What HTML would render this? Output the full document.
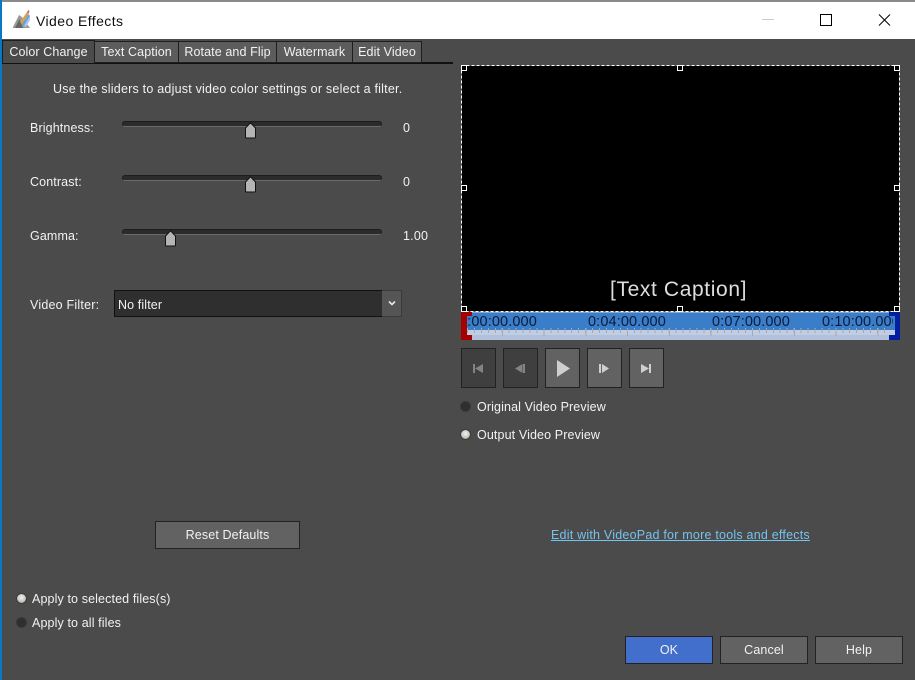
<!DOCTYPE html>
<html><head><meta charset="utf-8"><title>Video Effects</title>
<style>
html,body{margin:0;padding:0;background:#4b4b4b}
#w{position:relative;width:915px;height:680px;overflow:hidden;background:#4b4b4b;font-family:"Liberation Sans",sans-serif;font-size:12.5px;color:#f2f2f2}
#w div,#w span,#w svg{position:absolute;box-sizing:border-box}
.t{white-space:nowrap;line-height:14px;letter-spacing:.22px}
.s{letter-spacing:.12px}
.tab{top:41px;height:22px;background:#5c5c5c;border:1px solid #1e1e1e;text-align:center;line-height:21px;letter-spacing:.1px;white-space:nowrap}
.track{left:122px;width:260px;height:6px;background:#2b2b2b;border:1px solid #1d1d1d;border-bottom-color:#6a6a6a;border-radius:3px}
.btn{background:#626262;border:1px solid #222;text-align:center;line-height:27px;letter-spacing:.12px;white-space:nowrap}
.r{width:11px;height:11px;border-radius:50%;border:1px solid #3a3a3a}
.off{background:#2f2f2f}
.on{background:radial-gradient(circle at 50% 40%,#f2f2ee 0,#c8c8c2 55%,#8b8b86 100%)}
.pb{top:348px;width:35px;height:40px;border:1px solid #222}
.h{width:6px;height:6px;background:#000;border:1px solid #fff}
.tl{top:314px;font-size:14.5px;line-height:16px;color:#0c1b3a;letter-spacing:.12px;white-space:nowrap}
</style></head><body>
<div id="w">
<div style="left:0;top:0;width:915px;height:2px;background:#8a8a8a"></div>
<div style="left:0;top:2px;width:915px;height:37px;background:#fff"></div>
<div style="left:0;top:0;width:2px;height:680px;background:#0a78c8"></div>
<svg style="left:12px;top:9px" width="20" height="20" viewBox="0 0 20 20">
<path d="M0.500 19 L7 6 L10 8 L18 19 Z" fill="#9a9a9a"/>
<path d="M3 19 L7.500 10 L11 19 Z" fill="#666"/>
<path d="M8 13 L15 3 L16.500 5 L10 15 Z" fill="#e0a040"/>
<path d="M10 15 L16.500 5 L18 7 L12 17 Z" fill="#6aa0e0"/>
<path d="M12 17 L18 7 L18 11 L14 18 Z" fill="#a8c8ee"/>
<path d="M15 3 L16.500 1 L17.500 2 L16.500 5 Z" fill="#d86060"/>
</svg>
<span class="t" style="left:36px;top:12px;font-size:14px;line-height:18px;color:#111;letter-spacing:.42px">Video Effects</span>
<svg style="left:760px;top:10px" width="150" height="22" viewBox="0 0 150 22" fill="none">
<path d="M2 9.500H14" stroke="#ccc"/>
<rect x="60.500" y="4.500" width="11" height="11" stroke="#000"/>
<path d="M119 4.500L130 15.500M130 4.500L119 15.500" stroke="#000"/>
</svg>

<div style="left:2px;top:62px;width:451px;height:2px;background:#111"></div>
<div class="tab" style="left:2px;top:40px;width:93px;height:24px;background:#4b4b4b;line-height:22px;border-color:#1e1e1e;border-bottom-color:#111">Color Change</div>
<div class="tab" style="left:94px;width:85px">Text Caption</div>
<div class="tab" style="left:178px;width:99px">Rotate and Flip</div>
<div class="tab" style="left:276px;width:77px">Watermark</div>
<div class="tab" style="left:352px;width:70px">Edit Video</div>

<span class="t" style="left:53px;top:82px">Use the sliders to adjust video color settings or select a filter.</span>

<span class="t s" style="left:30px;top:121px">Brightness:</span>
<div class="track" style="top:121px"></div>
<svg style="left:244px;top:122px" width="13" height="17" viewBox="0 0 13 17"><path d="M6.500 .8L11.500 6V15Q11.500 16 10.500 16H2.500Q1.500 16 1.500 15V6Z" fill="#b4b4b4" stroke="#111"/></svg>
<span class="t" style="left:403px;top:121px">0</span>

<span class="t s" style="left:30px;top:175px">Contrast:</span>
<div class="track" style="top:175px"></div>
<svg style="left:244px;top:176px" width="13" height="17" viewBox="0 0 13 17"><path d="M6.500 .8L11.500 6V15Q11.500 16 10.500 16H2.500Q1.500 16 1.500 15V6Z" fill="#b4b4b4" stroke="#111"/></svg>
<span class="t" style="left:403px;top:175px">0</span>

<span class="t s" style="left:30px;top:229px">Gamma:</span>
<div class="track" style="top:229px"></div>
<svg style="left:164px;top:230px" width="13" height="17" viewBox="0 0 13 17"><path d="M6.500 .8L11.500 6V15Q11.500 16 10.500 16H2.500Q1.500 16 1.500 15V6Z" fill="#b4b4b4" stroke="#111"/></svg>
<span class="t" style="left:403px;top:229px">1.00</span>

<span class="t" style="left:30px;top:298px">Video Filter:</span>
<div style="left:114px;top:290px;width:269px;height:27px;background:#2f2f2f;border:1px solid #111"></div>
<span class="t s" style="left:118px;top:298px">No filter</span>
<div style="left:382px;top:290px;width:20px;height:27px;background:#555;border:1px solid #3a3a3a;border-left:0"></div>
<svg style="left:387px;top:299px" width="10" height="8" viewBox="0 0 10 8"><path d="M2 2.500L5 5.500L8 2.500" fill="none" stroke="#e8e8e8" stroke-width="1.600"/></svg>

<!-- preview -->
<div style="left:462px;top:66px;width:437px;height:245px;background:#000"></div>
<svg style="left:461px;top:65px" width="440" height="248" viewBox="0 0 440 248"><rect x=".5" y=".5" width="438" height="246" fill="none" stroke="#fff" stroke-dasharray="3 2"/></svg>
<div class="h" style="left:461px;top:65px"></div>
<div class="h" style="left:677px;top:65px"></div>
<div class="h" style="left:894px;top:65px"></div>
<div class="h" style="left:461px;top:185px"></div>
<div class="h" style="left:894px;top:185px"></div>
<div class="h" style="left:461px;top:306px"></div>
<div class="h" style="left:677px;top:306px"></div>
<div class="h" style="left:894px;top:306px"></div>
<span class="t" style="left:610px;top:277px;font-size:21px;line-height:25px;color:#dedede;letter-spacing:.62px">[Text Caption]</span>

<!-- timeline -->
<div style="left:461px;top:312px;width:439px;height:28px;background:#b1c1dc"></div>
<div style="left:461px;top:312px;width:439px;height:18px;background:#3a7dc8;border-top:1px solid #8aa8cf"></div>
<div style="left:467px;top:330px;width:428px;height:5px;background:#c0cde2"></div>
<div style="left:467px;top:328px;width:424px;height:5px;background:repeating-linear-gradient(90deg,#a9a9a9 0,#a9a9a9 1px,transparent 1px,transparent 6.950px)"></div>
<div style="left:502px;top:328px;width:390px;height:8px;background:repeating-linear-gradient(90deg,#a9a9a9 0,#a9a9a9 1px,transparent 1px,transparent 41.700px)"></div>
<div class="tl" style="left:467px;width:73px;overflow:hidden;text-indent:-8px;word-spacing:0">0:00:00.000</div>
<span class="tl" style="left:588px">0:04:00.000</span>
<span class="tl" style="left:712px">0:07:00.000</span>
<div class="tl" style="left:822px;width:71px;overflow:hidden">0:10:00.000</div>
<!-- red bracket -->
<div style="left:461px;top:312px;width:6px;height:28px;background:#a80000"></div>
<div style="left:461px;top:312px;width:11px;height:4px;background:#a80000"></div>
<div style="left:461px;top:335px;width:11px;height:5px;background:#a80000"></div>
<!-- blue bracket -->
<div style="left:895px;top:312px;width:5px;height:28px;background:#00209f"></div>
<div style="left:889px;top:312px;width:11px;height:4px;background:#00209f"></div>
<div style="left:889px;top:335px;width:11px;height:5px;background:#00209f"></div>

<!-- playback -->
<div class="pb" style="left:461px;background:#3f3f3f"></div>
<div class="pb" style="left:503px;background:#3f3f3f"></div>
<div class="pb" style="left:545px;background:#626262"></div>
<div class="pb" style="left:587px;background:#626262"></div>
<div class="pb" style="left:629px;background:#626262"></div>
<svg style="left:461px;top:348px" width="205" height="40" viewBox="0 0 205 40">
<path d="M12 16h2v9h-2zM14 20.500L22 16V25Z" fill="#7e867e"/>
<path d="M54 20.500L61.500 16V25ZM62 16h2v9h-2z" fill="#7e867e"/>
<path d="M96 12L109 20.500L96 29Z" fill="#cfcfcf"/>
<path d="M138 16h2v9h-2zM141 16L148 20.500L141 25Z" fill="#cfcfcf"/>
<path d="M180 16L188 20.500L180 25ZM188 16h2v9h-2z" fill="#cfcfcf"/>
</svg>

<div class="r off" style="left:460px;top:401px"></div>
<span class="t s" style="left:477px;top:400px">Original Video Preview</span>
<div class="r on" style="left:460px;top:429px"></div>
<span class="t s" style="left:477px;top:428px">Output Video Preview</span>

<span class="t" style="left:551px;top:528px;color:#74c3ee;text-decoration:underline">Edit with VideoPad for more tools and effects</span>

<div class="btn" style="left:155px;top:521px;width:145px;height:28px">Reset Defaults</div>

<div class="r on" style="left:16px;top:593px"></div>
<span class="t s" style="left:32px;top:592px">Apply to selected files(s)</span>
<div class="r off" style="left:16px;top:617px"></div>
<span class="t s" style="left:32px;top:616px">Apply to all files</span>

<div class="btn" style="left:625px;top:636px;width:88px;height:28px;background:#416fcb">OK</div>
<div class="btn" style="left:720px;top:636px;width:88px;height:28px">Cancel</div>
<div class="btn" style="left:815px;top:636px;width:88px;height:28px">Help</div>
</div>
</body></html>
